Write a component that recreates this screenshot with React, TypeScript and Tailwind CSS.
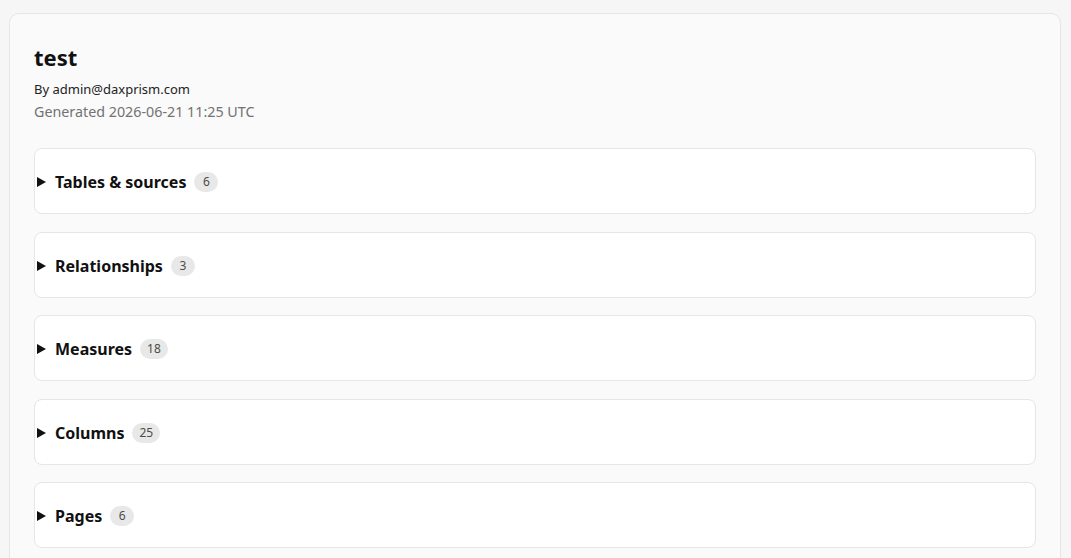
const sections = [
  { title: "Tables & sources", count: 6 },
  { title: "Relationships", count: 3 },
  { title: "Measures", count: 18 },
  { title: "Columns", count: 25 },
  { title: "Pages", count: 6 },
];

const Caret = () => (
  <svg width="9" height="10" viewBox="0 0 9 10" className="shrink-0">
    <path d="M0 0 L9 5 L0 10 Z" fill="#111" />
  </svg>
);

export default function App() {
  return (
    <div
      className="bg-[#f6f6f6] pt-[13px] pl-[9px] pr-[10px] overflow-hidden h-[558px]"
      style={{ fontFamily: '"Noto Sans", "Open Sans", sans-serif' }}
    >
      <div className="bg-[#fafafa] border border-[#e6e6e6] rounded-[10px] px-6 pt-[28px] pb-6 h-[600px]">
        <h1 className="text-[22px] leading-[30px] font-bold text-[#111]">test</h1>
        <p className="mt-[7px] text-[13px] leading-[20px] text-[#222]">By admin@daxprism.com</p>
        <p className="mt-[3px] text-[14.3px] leading-[20px] text-[#727272]">
          Generated 2026-06-21 11:25 UTC
        </p>
        <div className="mt-[26px] flex flex-col gap-[17.5px]">
          {sections.map((s) => (
            <div
              key={s.title}
              className="bg-white border border-[#e6e6e6] rounded-[8px] h-[66px] flex items-center pl-[2px] pt-[2px]"
            >
              <Caret />
              <span className="ml-[9px] text-[16px] font-bold text-[#111]">{s.title}</span>
              <span className="ml-[8px] h-[20px] min-w-[24px] px-[7px] rounded-full bg-[#e8e8e8] text-[12px] text-[#4b4b4b] flex items-center justify-center">
                {s.count}
              </span>
            </div>
          ))}
        </div>
      </div>
    </div>
  );
}
